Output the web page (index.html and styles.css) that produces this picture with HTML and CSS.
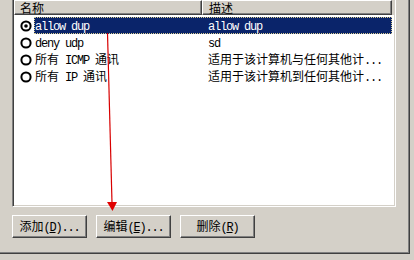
FILE: index.html
```html
<!DOCTYPE html>
<html lang="zh-CN">
<head>
    <meta charset="UTF-8">
    <title>规则列表</title>
    <link rel="stylesheet" href="styles.css">
</head>
<body>

    <div class="page">

        <div class="list-box">
            <div class="list-header">
                <div class="head-cell col-name">名称</div>
                <div class="head-cell col-desc">描述</div>
            </div>

            <div class="list-rows">
                <div class="row">
                    <svg class="radio" width="12" height="12" viewBox="0 0 12 12"><circle cx="6" cy="6" r="4.6" fill="#fff" stroke="#000" stroke-width="2"/><circle cx="6" cy="6" r="1.8" fill="#000"/></svg>
                    <div class="cells selected">
                        <span class="cell-name"><span class="en">allow dup</span></span>
                        <span class="cell-desc"><span class="en">allow dup</span></span>
                    </div>
                </div>
                <div class="row">
                    <svg class="radio" width="12" height="12" viewBox="0 0 12 12"><circle cx="6" cy="6" r="4.6" fill="#fff" stroke="#000" stroke-width="2"/></svg>
                    <div class="cells">
                        <span class="cell-name"><span class="en">deny udp</span></span>
                        <span class="cell-desc"><span class="en">sd</span></span>
                    </div>
                </div>
                <div class="row">
                    <svg class="radio" width="12" height="12" viewBox="0 0 12 12"><circle cx="6" cy="6" r="4.6" fill="#fff" stroke="#000" stroke-width="2"/></svg>
                    <div class="cells">
                        <span class="cell-name">所有<span class="en"> ICMP </span>通讯</span>
                        <span class="cell-desc">适用于该计算机与任何其他计<span class="en">...</span></span>
                    </div>
                </div>
                <div class="row">
                    <svg class="radio" width="12" height="12" viewBox="0 0 12 12"><circle cx="6" cy="6" r="4.6" fill="#fff" stroke="#000" stroke-width="2"/></svg>
                    <div class="cells">
                        <span class="cell-name">所有<span class="en"> IP </span>通讯</span>
                        <span class="cell-desc">适用于该计算机到任何其他计<span class="en">...</span></span>
                    </div>
                </div>
            </div>
        </div>

        <div class="buttons">
            <button class="win-button">添加<span class="en">(<u>D</u>)...</span></button>
            <button class="win-button">编辑<span class="en">(<u>E</u>)...</span></button>
            <button class="win-button">删除<span class="en">(<u>R</u>)</span></button>
        </div>

    </div>

    <!-- red annotation arrow drawn over the dialog -->
    <svg class="arrow" width="414" height="260" viewBox="0 0 414 260">
        <line x1="107.5" y1="33" x2="112" y2="203" stroke="#d80000" stroke-width="1.2"/>
        <polygon points="107,202 117,202 112.5,211" fill="#e00000"/>
    </svg>

</body>
</html>
```

FILE: styles.css
```css
body {
    margin: 0;
    width: 414px;
    height: 260px;
    overflow: hidden;
    position: relative;
    background-color: #d4d0c8;
    font-family: "Noto Sans CJK SC", sans-serif;
    font-size: 12px;
    color: #000000;
}

.en {
    font-family: "Liberation Mono", monospace;
    font-size: 12px;
    letter-spacing: -1.2px;
}

.page {
    margin: -2px 0 0 -4px;
    width: 414px;
    height: 256px;
    padding-left: 16px;
    box-sizing: border-box;
    border-right: 1px solid #404040;
    border-bottom: 1px solid #404040;
    box-shadow: inset -1px -1px #808080;
}

.list-box {
    width: 384px;
    height: 209px;
    box-sizing: border-box;
    background-color: #ffffff;
    border-top: 1px solid #808080;
    border-left: 1px solid #808080;
    border-right: 1px solid #ffffff;
    border-bottom: 1px solid #ffffff;
    box-shadow: inset 1px 1px #404040, inset -1px -1px #d4d0c8;
    padding: 1px;
}

.list-header {
    display: flex;
    height: 15px;
    background-color: #d4d0c8;
}

.head-cell {
    box-sizing: border-box;
    height: 15px;
    line-height: 12px;
    padding: 1px 0 0 6px;
    border-top: 1px solid #ffffff;
    border-left: 1px solid #ffffff;
    border-right: 1px solid #404040;
    border-bottom: 1px solid #404040;
    box-shadow: inset -1px -1px #808080;
    white-space: nowrap;
}

.col-name {
    width: 188px;
    padding-left: 5px;
}

.col-desc {
    width: 190px;
}

.list-rows {
    padding-top: 2px;
}

.row {
    display: flex;
    align-items: center;
    height: 17px;
}

.radio {
    margin-left: 6px;
    width: 12px;
    flex-shrink: 0;
}

.cells {
    display: flex;
    align-items: center;
    width: 358px;
    height: 17px;
    margin-left: 2px;
    box-sizing: border-box;
    border: 1px solid transparent;
    line-height: 15px;
    white-space: nowrap;
}

.cells.selected {
    background-color: #0a246a;
    color: #ffffff;
    border: 1px dotted #d8cc90;
}

.cell-name {
    width: 167px;
}

.cell-desc {
    width: 189px;
    padding-left: 6px;
    box-sizing: border-box;
}

.buttons {
    display: flex;
    gap: 9px;
    margin-top: 8px;
}

.win-button {
    width: 75px;
    height: 23px;
    padding: 0;
    box-sizing: border-box;
    background-color: #d4d0c8;
    color: #000000;
    font-family: "Noto Sans CJK SC", sans-serif;
    font-size: 12px;
    line-height: 19px;
    border: 1px solid;
    border-color: #ffffff #404040 #404040 #ffffff;
    box-shadow: inset -1px -1px #808080;
    white-space: nowrap;
}

.arrow {
    position: absolute;
    left: 0;
    top: 0;
    pointer-events: none;
}
```
